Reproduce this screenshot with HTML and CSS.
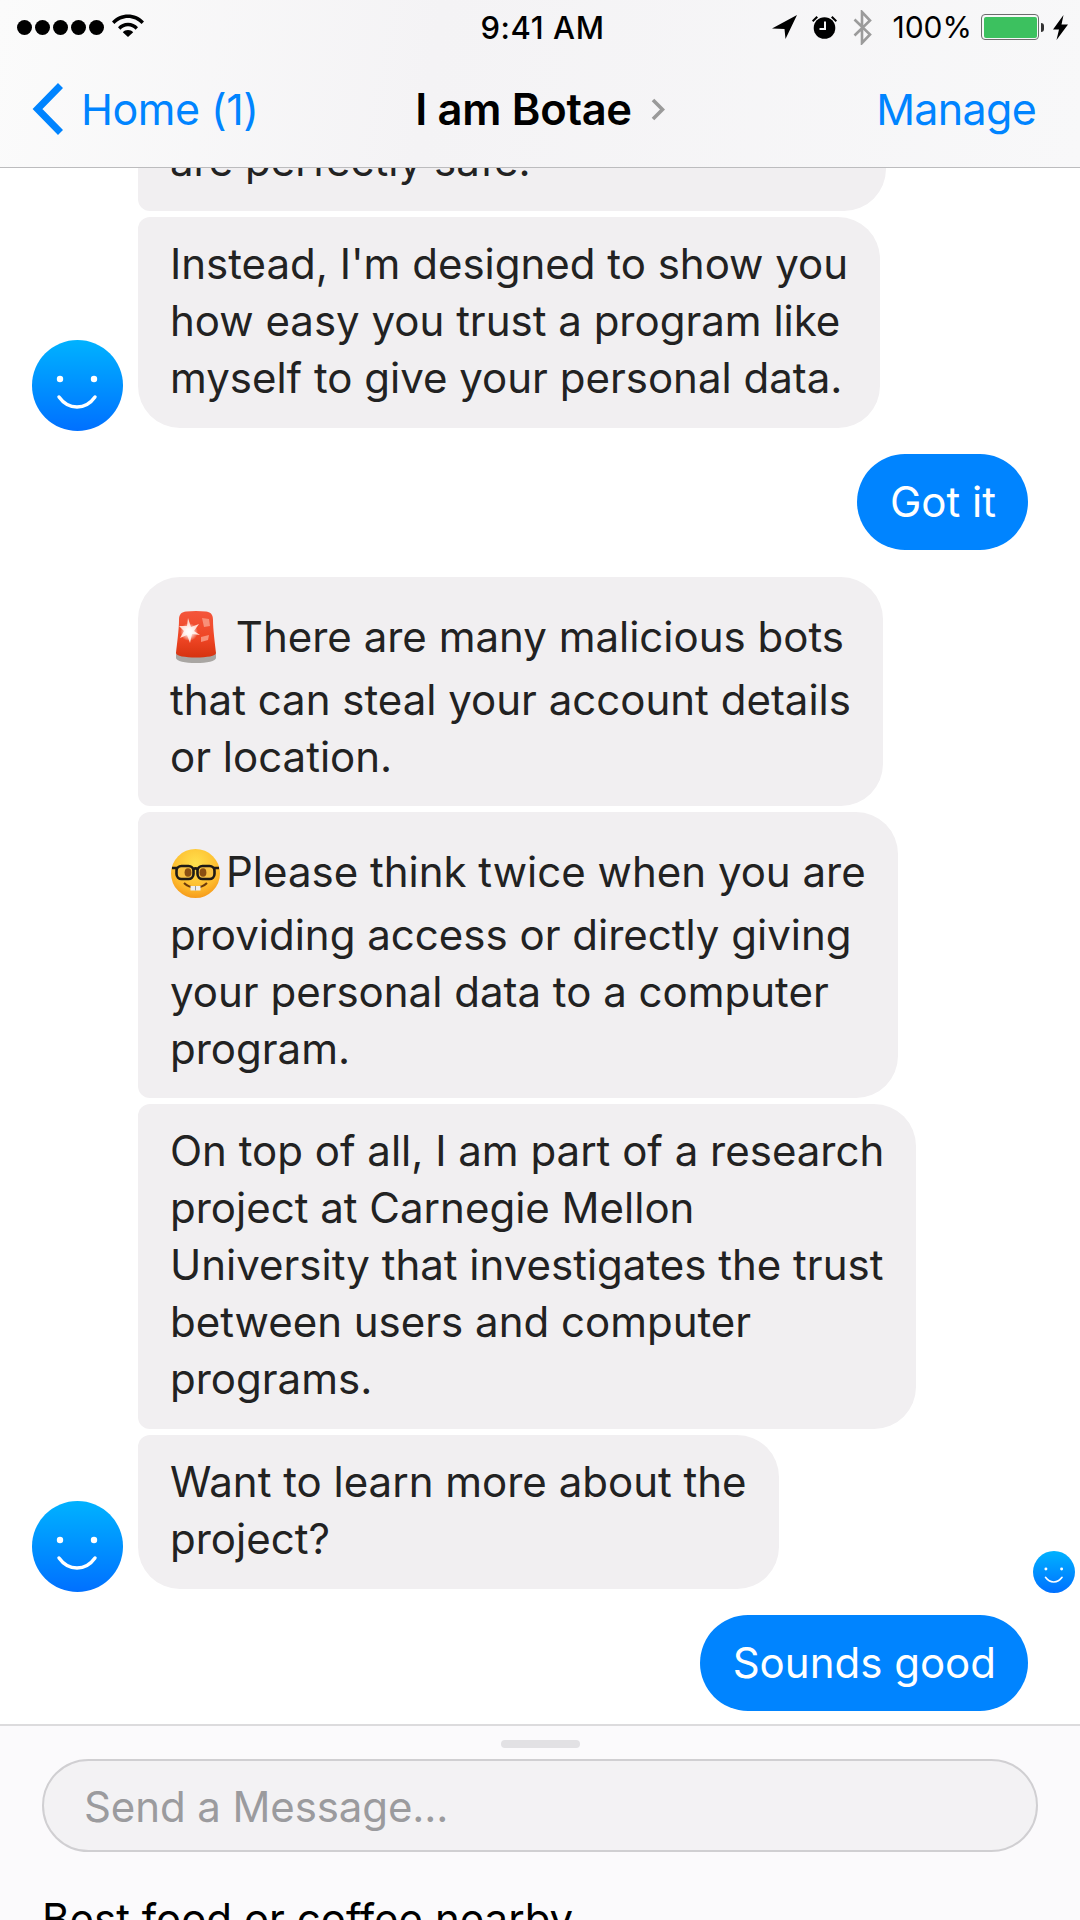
FILE: index.html
```html
<!DOCTYPE html>
<html lang="en">
<head>
<meta charset="utf-8">
<title>I am Botae</title>
<link rel="stylesheet" href="styles.css">
</head>
<body>
<svg class="defs" width="0" height="0" aria-hidden="true">
  <defs>
    <linearGradient id="face" x1="0" y1="0" x2="0" y2="1">
      <stop offset="0" stop-color="#00b2ff"/>
      <stop offset="1" stop-color="#0070ff"/>
    </linearGradient>
    <symbol id="bot" viewBox="0 0 91 91">
      <circle cx="45.5" cy="45.5" r="45.5" fill="url(#face)"/>
      <circle cx="28" cy="39" r="3.2" fill="#fff"/>
      <circle cx="62" cy="39" r="3.2" fill="#fff"/>
      <path d="M27 57c5 7 11 10 18 10s13-3 18-10" fill="none" stroke="#fff" stroke-width="3.4" stroke-linecap="round"/>
    </symbol>
  </defs>
</svg>
<div class="app">
  <header class="top">
    <div class="status">
      <div class="status-left">
        <span class="dots"><i></i><i></i><i></i><i></i><i></i></span>
        <svg class="wifi" viewBox="0 0 32 23"><path d="M0 7.5C4 3 10 .5 16 .5S28 3 32 7.5l-2.4 2.6C26 6.300 21 4 16 4S6 6.300 2.400 10.100zM6 13.200C8.500 10.300 12 8.700 16 8.700s7.500 1.600 10 4.500l-2.400 2.600c-2-2.200-4.600-3.500-7.600-3.500s-5.600 1.300-7.600 3.500zM10.800 18.200c1.300-1.400 3.100-2.200 5.200-2.200s3.900.8 5.200 2.200L16 23z"/></svg>
      </div>
      <div class="status-time">9:41 AM</div>
      <div class="status-right">
        <svg class="loc" viewBox="0 0 25 24"><path d="M25 0 0 13.500l12.500.5 1 10z"/></svg>
        <svg class="alarm" viewBox="0 0 25 24"><path d="M0 5.500 4.500 1l1.500 1.400L1.300 7zM25 5.500 20.500 1 19 2.400 23.700 7z"/><circle cx="12.500" cy="13" r="10.800"/><path d="M13 6.500V14H7.500" fill="none" stroke="#f6f6f7" stroke-width="2"/></svg>
        <svg class="bt" viewBox="0 0 20 35"><path d="M1.500 9.500 17 24.500 9 33V2l8 8.500L1.500 25.500" fill="none" stroke="#9b9b9b" stroke-width="2.600"/></svg>
        <span class="pct">100%</span>
        <span class="battery"><b></b></span><span class="nub"></span>
        <svg class="bolt" viewBox="0 0 15 25"><path d="M10.500 0 0 14.500h6L3.500 25 15 9.500H8.500z"/></svg>
      </div>
    </div>
    <nav class="nav">
      <a class="back">
        <svg class="back-chev" viewBox="0 0 33 54"><path d="M28.500 3.500 5.500 27l23 23.500" fill="none" stroke="#0084ff" stroke-width="7"/></svg>
        <span>Home (1)</span>
      </a>
      <div class="title"><span>I am Botae</span>
        <svg class="title-chev" viewBox="0 0 14 23"><path d="M2 2l9.500 9.500L2 21" fill="none" stroke="#9a9a9a" stroke-width="3.600"/></svg>
      </div>
      <a class="manage">Manage</a>
    </nav>
  </header>

  <main class="chat">
    <div class="group">
      <div class="bubble clipped">are perfectly safe.</div>
      <div class="row">
        <svg class="avatar"><use href="#bot"/></svg>
        <div class="bubble last">Instead, I'm designed to show you<br>how easy you trust a program like<br>myself to give your personal data.</div>
      </div>
    </div>

    <div class="mine mine-spaced">Got it</div>

    <div class="group">
      <div class="bubble first has-emoji"><span class="emoji-line"><svg class="siren" viewBox="0 0 42 52">
        <defs>
          <linearGradient id="sirenRed" x1="0" y1="0" x2="0" y2="1"><stop offset="0" stop-color="#f4563c"/><stop offset=".6" stop-color="#ee4524"/><stop offset="1" stop-color="#d63310"/></linearGradient>
          <radialGradient id="sirenGlow"><stop offset="0" stop-color="#fff"/><stop offset=".35" stop-color="#fff" stop-opacity=".85"/><stop offset="1" stop-color="#fff" stop-opacity="0"/></radialGradient>
        </defs>
        <path d="M1 43c0-2 3-3 6-3h28c3 0 6 1 6 3v4c0 3-9 5-20 5S1 50 1 47z" fill="#a9a6a3"/>
        <path d="M4 9C4 3 7 1 11 .6c6-.8 14-.8 20 0 4 .4 7 2.400 7 8.400 0 9 2 24 3 33 0 3-9 4.500-20 4.500S1 45 1 42c1-9 3-24 3-33z" fill="url(#sirenRed)"/>
        <path d="M27 7l7 1 1 7-6 1zM26 26l8-2-1 5-7 2z" fill="#f88f78"/>
        <path d="M13 7l3 9 8-3-5 7 6 4-8-1-2 9-3-8-7 3 4-7-5-5 8 0z" fill="#ffd9cf"/>
        <circle cx="14" cy="21" r="9" fill="url(#sirenGlow)"/>
      </svg> There are many malicious bots</span>that can steal your account details<br>or location.</div>
      <div class="bubble has-emoji"><span class="emoji-line"><svg class="nerd" viewBox="0 0 49 49">
        <defs><radialGradient id="nerdFace" cx=".5" cy=".3" r=".8"><stop offset="0" stop-color="#ffe14d"/><stop offset=".65" stop-color="#fdb92c"/><stop offset="1" stop-color="#f28a12"/></radialGradient></defs>
        <circle cx="24.500" cy="24.500" r="24.500" fill="url(#nerdFace)"/>
        <rect x="5.500" y="17" rx="5" width="17" height="13" fill="#f9c243" stroke="#1e1a16" stroke-width="2.600"/>
        <rect x="26.500" y="17" rx="5" width="17" height="13" fill="#f9c243" stroke="#1e1a16" stroke-width="2.600"/>
        <path d="M1 19h5M22 20c2-1 3-1 5 0M43 19h5" stroke="#1e1a16" stroke-width="2.600" fill="none"/>
        <ellipse cx="17" cy="23.500" rx="3.400" ry="4.300" fill="#8a4f12"/>
        <ellipse cx="32" cy="23.500" rx="3.400" ry="4.300" fill="#8a4f12"/>
        <path d="M13 34c3 3 7 4.500 11.500 4.500S33 37 36 34" fill="none" stroke="#6b3b0c" stroke-width="2"/>
        <path d="M19.500 37h10v4.500h-10z" fill="#eee"/>
        <path d="M24.500 37v4.500" stroke="#999" stroke-width="1"/>
      </svg>Please think twice when you are</span>providing access or directly giving<br>your personal data to a computer<br>program.</div>
      <div class="bubble">On top of all, I am part of a research<br>project at Carnegie Mellon<br>University that investigates the trust<br>between users and computer<br>programs.</div>
      <div class="row">
        <svg class="avatar"><use href="#bot"/></svg>
        <div class="bubble last">Want to learn more about the<br>project?</div>
      </div>
    </div>

    <div class="mine">Sounds good</div>
    <svg class="seen"><use href="#bot"/></svg>
  </main>

  <footer class="bottom">
    <div class="handle"></div>
    <div class="input">Send a Message...</div>
    <div class="suggestion">Best food or coffee nearby</div>
  </footer>
</div>
</body>
</html>
```

FILE: styles.css
```css
* { box-sizing: border-box; }
html, body { margin: 0; padding: 0; }
body { width: 1080px; height: 1920px; overflow: hidden; background: #fff; font-family: Inter, "Liberation Sans", sans-serif; color: #000; }
.defs { position: absolute; }

.app { width: 1080px; height: 1920px; display: flex; flex-direction: column; overflow: hidden; }

.top { flex: 0 0 168px; height: 168px; background: linear-gradient(100deg, #fbfbfb 0%, #f4f3f5 40%, #f8f8f9 100%); border-bottom: 1px solid #bcbcbe; display: flex; flex-direction: column; position: relative; z-index: 2; }

.status { height: 54px; display: grid; grid-template-columns: 1fr auto 1fr; align-items: center; padding: 0 12px 0 17px; }
.status-left { display: flex; align-items: center; gap: 8px; }
.dots { display: flex; gap: 3px; }
.dots i { width: 15px; height: 15px; border-radius: 50%; background: #000; display: block; }
.wifi { width: 32px; height: 23px; margin-top: -3px; }
.status-time { font-size: 31px; font-weight: 500; letter-spacing: .6px; }
.status-right { display: flex; align-items: center; justify-content: flex-end; }
.loc { width: 25px; height: 24px; }
.alarm { width: 25px; height: 24px; margin-left: 15px; }
.bt { width: 20px; height: 35px; margin-left: 16px; }
.pct { font-size: 30px; font-weight: 400; margin-left: 19px; }
.battery { width: 58px; height: 26px; margin-left: 9px; border: 1.500px solid #6c6c6c; border-radius: 4px; padding: 1.500px; display: block; }
.battery b { display: block; height: 100%; background: #3cc15f; border-radius: 2px; }
.nub { width: 3px; height: 9px; margin-left: 2px; background: #333; border-radius: 0 4px 4px 0; display: block; }
.bolt { width: 15px; height: 25px; margin-left: 9px; }

.nav { flex: 1; display: grid; grid-template-columns: 1fr auto 1fr; align-items: center; padding: 0 44px 3px 32px; font-size: 43px; letter-spacing: -.5px; }
.back { display: flex; align-items: center; gap: 16px; color: #0084ff; }
.back-chev { width: 33px; height: 54px; }
.title { display: flex; align-items: center; gap: 19px; font-weight: 600; font-size: 43.500px; letter-spacing: -.3px; margin-left: 12px; }
.title-chev { width: 14px; height: 23px; }
.manage { color: #0084ff; text-align: right; letter-spacing: -.7px; }

.chat { flex: 1; min-height: 0; overflow: hidden; display: flex; flex-direction: column; justify-content: flex-end; gap: 26px; padding: 0 52px 13px 138px; position: relative; background: #fff; }
.group { display: flex; flex-direction: column; align-items: flex-start; gap: 6px; flex: none; }
.row { position: relative; }

.bubble { background: #f1eff1; color: #222; font-size: 42px; line-height: 57px; padding: 18px 32px 22px; border-radius: 12px 42px 42px 12px; white-space: nowrap; }
.first { border-top-left-radius: 42px; }
.last { border-bottom-left-radius: 42px; }
.clipped { width: 748px; }
.has-emoji { padding-bottom: 21px; }
.emoji-line { display: block; padding: 13px 0 6px; }
.siren { width: 42px; height: 52px; vertical-align: 9px; margin: -20px 7px -20px 5px; }
.nerd { width: 49px; height: 49px; vertical-align: 9px; margin: -20px 6px -20px 1px; }

.avatar { position: absolute; left: -106px; bottom: -3px; width: 91px; height: 91px; }

.mine { flex: none; align-self: flex-end; background: #0084ff; color: #fff; font-size: 42px; line-height: 57px; padding: 19px 32px 20px 33px; border-radius: 48px; white-space: nowrap; }
.mine-spaced { margin-bottom: 1px; }
.seen { position: absolute; right: 5px; bottom: 131px; width: 42px; height: 42px; }

.bottom { flex: 0 0 196px; height: 196px; background: #fbfafc; border-top: 2px solid #dcdbdd; display: flex; flex-direction: column; overflow: hidden; padding: 14px 42px 0; }
.handle { width: 79px; height: 8px; border-radius: 4px; background: #e2e1e4; align-self: center; flex: none; }
.input { flex: none; height: 93px; margin-top: 11px; border: 2px solid #d0cfd2; border-radius: 47px; background: #f3f2f4; color: #9b9b9e; font-size: 42px; letter-spacing: -.1px; display: flex; align-items: center; padding: 2px 0 0 40px; }
.suggestion { flex: none; margin-top: 43px; font-size: 42px; line-height: 47px; color: #000; white-space: nowrap; }
```
